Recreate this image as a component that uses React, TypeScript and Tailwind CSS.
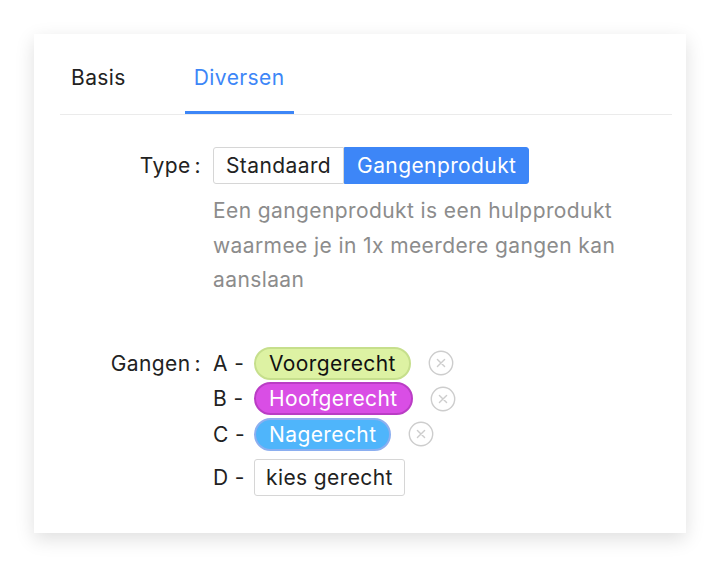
import { useState } from "react";

type Gang = {
  letter: string;
  name: string;
  pill: string;
};

const gangen: Gang[] = [
  {
    letter: "A",
    name: "Voorgerecht",
    pill: "bg-[#ddf2a3] border-[#c6df8c] text-[#111]",
  },
  {
    letter: "B",
    name: "Hoofgerecht",
    pill: "bg-[#d94ee5] border-[#ba3dc5] text-white",
  },
  {
    letter: "C",
    name: "Nagerecht",
    pill: "bg-[#4fb5fb] border-[#8caff0] text-white",
  },
];

function RemoveIcon() {
  return (
    <svg width="26" height="26" viewBox="0 0 24 24" fill="none">
      <circle cx="12" cy="12" r="10.8" stroke="#cdcdcd" strokeWidth="1.3" />
      <path
        d="M8.7 8.7 15.3 15.3 M15.3 8.7 8.7 15.3"
        stroke="#cdcdcd"
        strokeWidth="1.3"
        strokeLinecap="round"
      />
    </svg>
  );
}

export default function App() {
  const [tab, setTab] = useState<"basis" | "diversen">("diversen");
  const [type, setType] = useState<"standaard" | "gangen">("gangen");

  return (
    <div className="min-h-[568px] w-[720px] bg-white pt-[34px] pl-[34px] font-['Inter',sans-serif] text-[21px] tracking-[0.4px] text-[#222]">
      <div className="h-[499px] w-[652px] bg-white shadow-[0_6px_18px_rgba(0,0,0,0.13)]">
        <div className="ml-[26px] mr-[14px] flex gap-[48px] border-b border-[#ebebeb]">
          <button
            onClick={() => setTab("basis")}
            className={
              tab === "basis"
                ? "border-b-[3px] border-[#3d86f7] px-[11px] pt-[30px] pb-[19px] leading-[28px] text-[#3d86f7]"
                : "border-b-[3px] border-transparent px-[11px] pt-[30px] pb-[19px] leading-[28px]"
            }
          >
            Basis
          </button>
          <button
            onClick={() => setTab("diversen")}
            className={
              tab === "diversen"
                ? "border-b-[3px] border-[#3d86f7] px-[9px] pt-[30px] pb-[19px] leading-[28px] text-[#3d86f7]"
                : "border-b-[3px] border-transparent px-[9px] pt-[30px] pb-[19px] leading-[28px]"
            }
          >
            Diversen
          </button>
        </div>

        <div className="mt-[32px] flex gap-[12px]">
          <div className="w-[167px] text-right leading-[37px]">
            Type<span className="ml-[4px]">:</span>
          </div>
          <div>
            <div className="flex">
              <button
                onClick={() => setType("standaard")}
                className={
                  type === "standaard"
                    ? "rounded-l-[3px] border border-[#3d86f7] bg-[#3d86f7] px-[12px] leading-[35px] text-white"
                    : "rounded-l-[3px] border border-[#d6d6d6] bg-white px-[12px] leading-[35px]"
                }
              >
                Standaard
              </button>
              <button
                onClick={() => setType("gangen")}
                className={
                  type === "gangen"
                    ? "rounded-r-[3px] border border-[#3d86f7] bg-[#3d86f7] px-[12px] leading-[35px] text-white"
                    : "rounded-r-[3px] border border-[#d6d6d6] bg-white px-[12px] leading-[35px]"
                }
              >
                Gangenprodukt
              </button>
            </div>
            <p className="mt-[10px] w-[420px] leading-[34.5px] text-[#8c8c8c]">
              Een gangenprodukt is een hulpprodukt waarmee je in 1x meerdere
              gangen kan aanslaan
            </p>
          </div>
        </div>

        <div className="mt-[49px] flex gap-[12px]">
          <div className="w-[167px] text-right leading-[33px]">
            Gangen<span className="ml-[4px]">:</span>
          </div>
          <div className="flex flex-col gap-[2.5px]">
            {gangen.map((g) => (
              <div key={g.letter} className="flex items-center">
                <span className="w-[41px] leading-[33px]">{g.letter} -</span>
                <span
                  className={`rounded-full border-2 px-[13px] leading-[29px] ${g.pill}`}
                >
                  {g.name}
                </span>
                <button className="ml-[17px]">
                  <RemoveIcon />
                </button>
              </div>
            ))}
            <div className="mt-[6px] flex items-center">
              <span className="w-[41px]">D -</span>
              <button className="rounded-[3px] border border-[#d6d6d6] bg-white px-[11px] leading-[35px]">
                kies gerecht
              </button>
            </div>
          </div>
        </div>
      </div>
    </div>
  );
}
